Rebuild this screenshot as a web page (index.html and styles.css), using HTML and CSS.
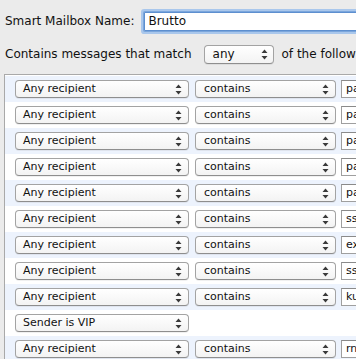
FILE: index.html
```html
<!DOCTYPE html>
<html>
<head>
<meta charset="utf-8">
<link rel="stylesheet" href="styles.css">
</head>
<body>
<div class="sheet">
  <div class="name-row">
    <span class="label">Smart Mailbox Name:</span>
    <div class="name-field">Brutto</div>
  </div>
  <div class="match-row">
    <span class="label">Contains messages that match</span>
    <div class="popup popup-any"><span>any</span><svg class="arrows" viewBox="0 0 7 11" width="7" height="11"><path d="M3.5 0.5 L6.5 4 H0.5 Z M3.5 10.5 L6.5 7 H0.5 Z" fill="#3a3a3a"/></svg></div>
    <span class="label">of the following conditions:</span>
  </div>
  <div class="list">
    <div class="row"><div class="popup p1"><span>Any recipient</span><svg class="arrows" viewBox="0 0 7 11" width="7" height="11"><path d="M3.5 0.5 L6.5 4 H0.5 Z M3.5 10.5 L6.5 7 H0.5 Z" fill="#3a3a3a"/></svg></div><div class="popup p2"><span>contains</span><svg class="arrows" viewBox="0 0 7 11" width="7" height="11"><path d="M3.5 0.5 L6.5 4 H0.5 Z M3.5 10.5 L6.5 7 H0.5 Z" fill="#3a3a3a"/></svg></div><div class="field">paypal</div></div>
    <div class="row"><div class="popup p1"><span>Any recipient</span><svg class="arrows" viewBox="0 0 7 11" width="7" height="11"><path d="M3.5 0.5 L6.5 4 H0.5 Z M3.5 10.5 L6.5 7 H0.5 Z" fill="#3a3a3a"/></svg></div><div class="popup p2"><span>contains</span><svg class="arrows" viewBox="0 0 7 11" width="7" height="11"><path d="M3.5 0.5 L6.5 4 H0.5 Z M3.5 10.5 L6.5 7 H0.5 Z" fill="#3a3a3a"/></svg></div><div class="field">payment</div></div>
    <div class="row"><div class="popup p1"><span>Any recipient</span><svg class="arrows" viewBox="0 0 7 11" width="7" height="11"><path d="M3.5 0.5 L6.5 4 H0.5 Z M3.5 10.5 L6.5 7 H0.5 Z" fill="#3a3a3a"/></svg></div><div class="popup p2"><span>contains</span><svg class="arrows" viewBox="0 0 7 11" width="7" height="11"><path d="M3.5 0.5 L6.5 4 H0.5 Z M3.5 10.5 L6.5 7 H0.5 Z" fill="#3a3a3a"/></svg></div><div class="field">packstation</div></div>
    <div class="row"><div class="popup p1"><span>Any recipient</span><svg class="arrows" viewBox="0 0 7 11" width="7" height="11"><path d="M3.5 0.5 L6.5 4 H0.5 Z M3.5 10.5 L6.5 7 H0.5 Z" fill="#3a3a3a"/></svg></div><div class="popup p2"><span>contains</span><svg class="arrows" viewBox="0 0 7 11" width="7" height="11"><path d="M3.5 0.5 L6.5 4 H0.5 Z M3.5 10.5 L6.5 7 H0.5 Z" fill="#3a3a3a"/></svg></div><div class="field">paket</div></div>
    <div class="row"><div class="popup p1"><span>Any recipient</span><svg class="arrows" viewBox="0 0 7 11" width="7" height="11"><path d="M3.5 0.5 L6.5 4 H0.5 Z M3.5 10.5 L6.5 7 H0.5 Z" fill="#3a3a3a"/></svg></div><div class="popup p2"><span>contains</span><svg class="arrows" viewBox="0 0 7 11" width="7" height="11"><path d="M3.5 0.5 L6.5 4 H0.5 Z M3.5 10.5 L6.5 7 H0.5 Z" fill="#3a3a3a"/></svg></div><div class="field">partner</div></div>
    <div class="row"><div class="popup p1"><span>Any recipient</span><svg class="arrows" viewBox="0 0 7 11" width="7" height="11"><path d="M3.5 0.5 L6.5 4 H0.5 Z M3.5 10.5 L6.5 7 H0.5 Z" fill="#3a3a3a"/></svg></div><div class="popup p2"><span>contains</span><svg class="arrows" viewBox="0 0 7 11" width="7" height="11"><path d="M3.5 0.5 L6.5 4 H0.5 Z M3.5 10.5 L6.5 7 H0.5 Z" fill="#3a3a3a"/></svg></div><div class="field">ssl</div></div>
    <div class="row"><div class="popup p1"><span>Any recipient</span><svg class="arrows" viewBox="0 0 7 11" width="7" height="11"><path d="M3.5 0.5 L6.5 4 H0.5 Z M3.5 10.5 L6.5 7 H0.5 Z" fill="#3a3a3a"/></svg></div><div class="popup p2"><span>contains</span><svg class="arrows" viewBox="0 0 7 11" width="7" height="11"><path d="M3.5 0.5 L6.5 4 H0.5 Z M3.5 10.5 L6.5 7 H0.5 Z" fill="#3a3a3a"/></svg></div><div class="field">express</div></div>
    <div class="row"><div class="popup p1"><span>Any recipient</span><svg class="arrows" viewBox="0 0 7 11" width="7" height="11"><path d="M3.5 0.5 L6.5 4 H0.5 Z M3.5 10.5 L6.5 7 H0.5 Z" fill="#3a3a3a"/></svg></div><div class="popup p2"><span>contains</span><svg class="arrows" viewBox="0 0 7 11" width="7" height="11"><path d="M3.5 0.5 L6.5 4 H0.5 Z M3.5 10.5 L6.5 7 H0.5 Z" fill="#3a3a3a"/></svg></div><div class="field">ssh</div></div>
    <div class="row"><div class="popup p1"><span>Any recipient</span><svg class="arrows" viewBox="0 0 7 11" width="7" height="11"><path d="M3.5 0.5 L6.5 4 H0.5 Z M3.5 10.5 L6.5 7 H0.5 Z" fill="#3a3a3a"/></svg></div><div class="popup p2"><span>contains</span><svg class="arrows" viewBox="0 0 7 11" width="7" height="11"><path d="M3.5 0.5 L6.5 4 H0.5 Z M3.5 10.5 L6.5 7 H0.5 Z" fill="#3a3a3a"/></svg></div><div class="field">kunde</div></div>
    <div class="row"><div class="popup p1"><span>Sender is VIP</span><svg class="arrows" viewBox="0 0 7 11" width="7" height="11"><path d="M3.5 0.5 L6.5 4 H0.5 Z M3.5 10.5 L6.5 7 H0.5 Z" fill="#3a3a3a"/></svg></div></div>
    <div class="row"><div class="popup p1"><span>Any recipient</span><svg class="arrows" viewBox="0 0 7 11" width="7" height="11"><path d="M3.5 0.5 L6.5 4 H0.5 Z M3.5 10.5 L6.5 7 H0.5 Z" fill="#3a3a3a"/></svg></div><div class="popup p2"><span>contains</span><svg class="arrows" viewBox="0 0 7 11" width="7" height="11"><path d="M3.5 0.5 L6.5 4 H0.5 Z M3.5 10.5 L6.5 7 H0.5 Z" fill="#3a3a3a"/></svg></div><div class="field">rnd</div></div>
  </div>
</div>
</body>
</html>
```

FILE: styles.css
```css
html, body {
  margin: 0;
  padding: 0;
  width: 356px;
  height: 359px;
  overflow: hidden;
  background: #ebebeb;
}

.sheet {
  font-family: "DejaVu Sans", "Liberation Sans", sans-serif;
  color: #111;
  width: 600px;
}

.label {
  font-size: 12px;
  white-space: nowrap;
}

.name-row {
  display: flex;
  align-items: center;
  padding-top: 12px;
  padding-left: 5px;
  height: 18px;
}

.name-field {
  box-sizing: border-box;
  margin-left: 10px;
  width: 420px;
  height: 19px;
  background: #fff;
  border: 1px solid #5d8fcf;
  box-shadow: 0 0 0 1px #7ba6dc, 0 0 0 3px #a9c7ec;
  border-radius: 1px;
  font-size: 12px;
  line-height: 17px;
  padding-left: 3px;
}

.match-row {
  display: flex;
  align-items: center;
  padding-left: 5px;
  margin-top: 14px;
  height: 20px;
}

.popup {
  box-sizing: border-box;
  display: flex;
  align-items: center;
  justify-content: space-between;
  height: 18px;
  background: linear-gradient(#ffffff, #f3f3f3);
  border: 1px solid #a3a3a3;
  border-bottom-color: #8e8e8e;
  border-radius: 4px;
  box-shadow: 0 1px 0 rgba(0, 0, 0, 0.06);
  font-size: 11px;
  color: #111;
  white-space: nowrap;
}

.popup span {
  line-height: 16px;
}

.arrows {
  flex: none;
}

.popup-any {
  margin-left: 12px;
  margin-right: 8px;
  width: 70px;
  height: 19px;
  padding: 0 5px 0 8px;
  font-size: 12px;
}

.list {
  margin-top: 10px;
  margin-left: 4px;
  border: 1px solid #a9a9a9;
  border-right: none;
  background: #fff;
  padding-top: 1px;
  height: 400px;
}

.row {
  display: flex;
  align-items: center;
  height: 26px;
  padding-left: 10px;
}

.row:nth-child(odd) {
  background: #edf3fd;
}

.p1 {
  width: 174px;
  padding: 0 6px 0 7px;
}

.p2 {
  width: 141px;
  margin-left: 6px;
  padding: 0 6px 0 8px;
}

.field {
  box-sizing: border-box;
  margin-left: 5px;
  width: 120px;
  height: 18px;
  background: #fff;
  border: 1px solid #9f9f9f;
  border-top-color: #8a8a8a;
  font-size: 11px;
  line-height: 16px;
  padding-left: 4px;
  white-space: nowrap;
  overflow: hidden;
}
```
